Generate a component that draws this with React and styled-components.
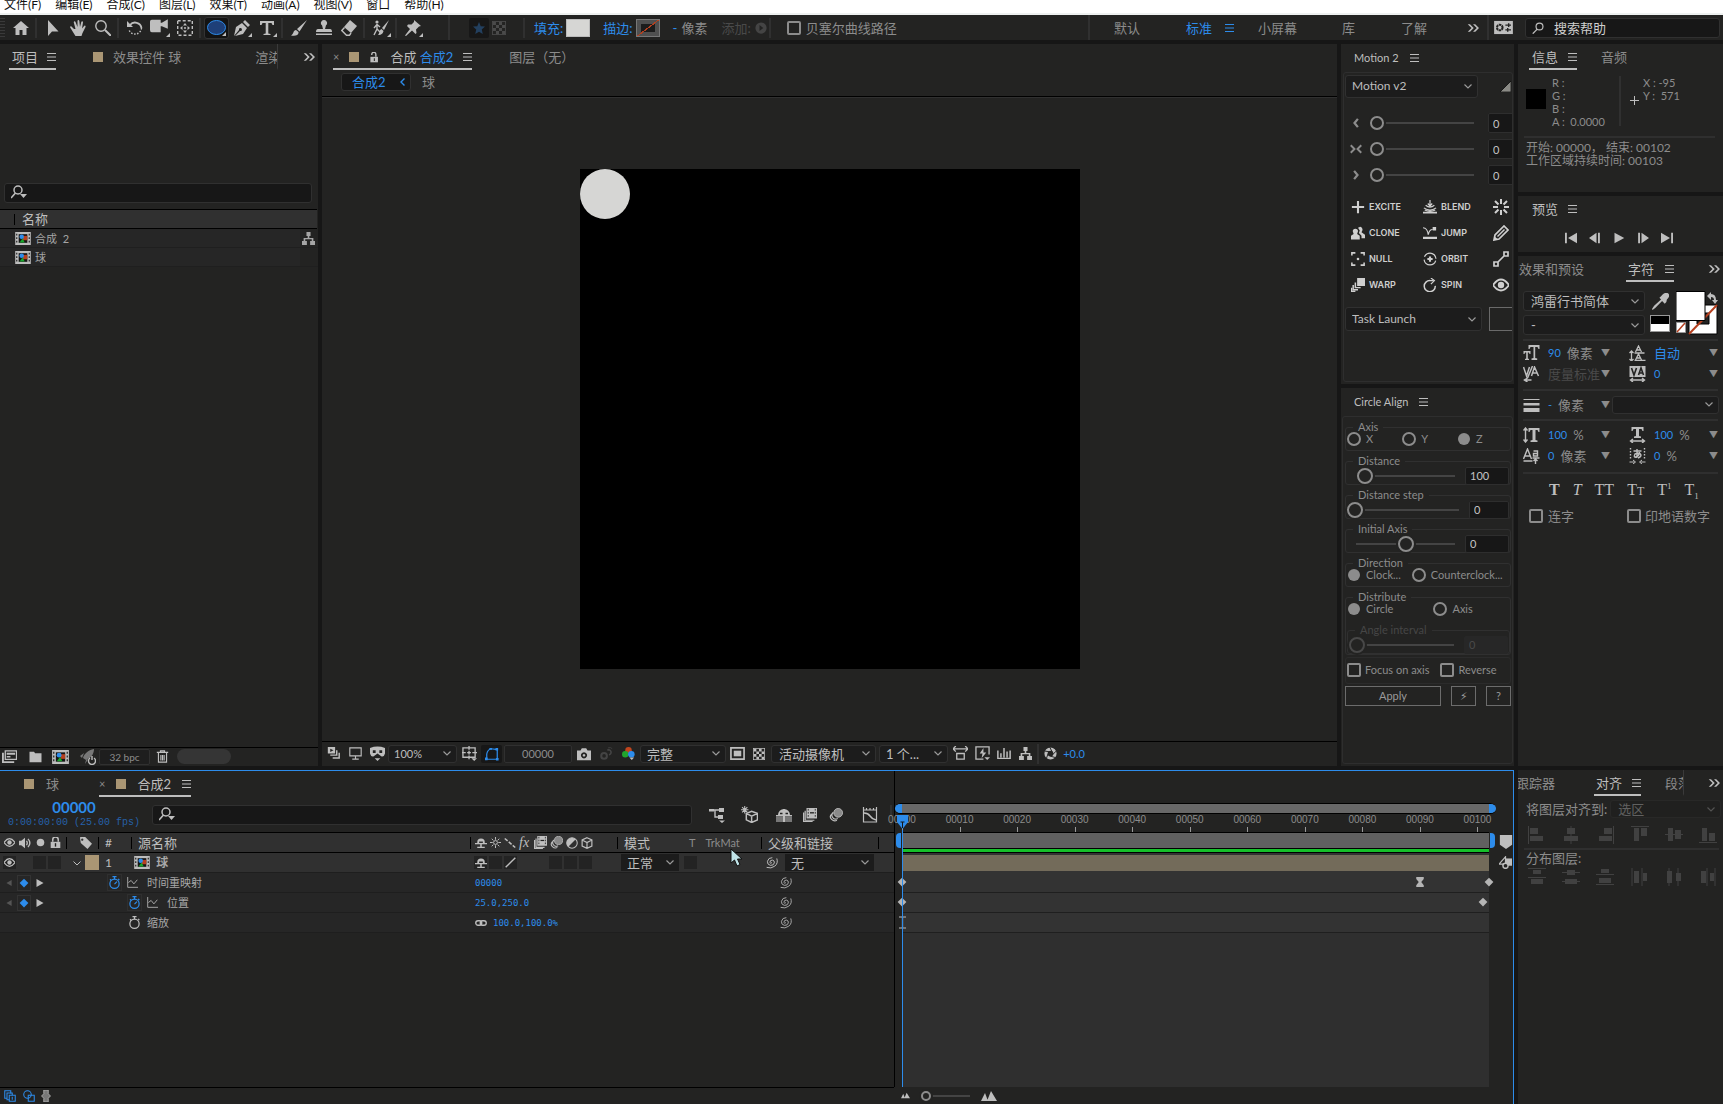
import React from "react";
import styled, { createGlobalStyle, css } from "styled-components";

const BLUE = "#2d8ceb";
const PANEL = "#232322";
const GAP = "#161616";
const DARK = "#171717";
const LINE = "#303030";
const DIM = "#8c8c8c";
const LIGHT = "#bebebe";
const TAN = "#aa9674";

const CHEVRON = `url("data:image/svg+xml,%3Csvg xmlns='http://www.w3.org/2000/svg' width='8' height='5'%3E%3Cpath d='M.5 .5L4 4L7.500 .5' fill='none' stroke='%23999' stroke-width='1.2'/%3E%3C/svg%3E")`;

const GlobalStyle = createGlobalStyle`
  * { box-sizing: border-box; }
  body {
    margin: 0;
    background: ${GAP};
    color: ${DIM};
    font: 12px/14px Lato, "Noto Sans CJK SC", sans-serif;
    overflow: hidden;
  }
  button, input, select { font: inherit; color: inherit; margin: 0; }
  button { background: none; border: 0; padding: 0; white-space: nowrap; }
  svg { display: block; flex: none; }
`;

/* ---------- icons ---------- */

const s = { fill: "none", stroke: "currentColor", strokeWidth: 1.4 };

const paths = {
  home: <path d="M8 1L0 8h2.500v7h4v-5h3v5h4V8H16z" fill="currentColor" />,
  arrow: <path d="M3 0v16l4-4.500h6.500z" fill="currentColor" />,
  hand: <path d="M4 9L1.500 6.500C.5 5.500-.5 7 .5 8l4 6.500 1 1.500h6l1-3 3-6c.5-1.500-1-2-1.600-.8L12 8.500l1-6c.2-1.500-1.500-1.500-1.800-.3L10 7 9.300.8C9-.3 7.500-.3 7.500 1v6L5.500 2C5 .8 3.500 1.300 3.800 2.500L5.500 9z" fill="currentColor" />,
  zoom: <g {...s}><circle cx="6" cy="6" r="5.200" /><path d="M10 10l6 6" strokeWidth="2" /></g>,
  rotate: <g {...s}><path d="M3 5a6.500 6.500 0 0 1 11.500 3" strokeWidth="1.800" /><path d="M14.500 8A6.500 6.500 0 0 1 2 10" strokeDasharray="1.500 1.500" /><path d="M0 1v6h6z" fill="currentColor" stroke="none" /></g>,
  video: <path d="M0 3q0-1.500 1.500-1.500H9V4h1l5-3v8l-5-2h-1v5H1.500Q0 12 0 10z" fill="currentColor" />,
  anchor: <g><rect x=".7" y=".7" width="14.600" height="14.600" {...s} strokeDasharray="3 2" /><path d="M8 3l2 2.500H6zM8 13l2-2.500H6zM3 8l2.500-2v4zM13 8l-2.500-2v4z" fill="currentColor" /><circle cx="8" cy="8" r="1" fill="currentColor" /></g>,
  pen: <path d="M0 16l2-9 6-4 5 5-4 6-8 2 5-5a1.500 1.500 0 1 0-1-1zM9 2l2-2 5 5-2 2z" fill="currentColor" />,
  type: <path d="M1 1h14v4h-1.500L12.500 3H9.300v10.500l2.200.5v1h-7v-1l2.200-.5V3H3.500L2.500 5H1z" fill="currentColor" />,
  brush: <path d="M16 0L6 9l2.500 2.500zM5 10C2 10 3 14 0 15.500c4 1 8 0 7.500-3.500z" fill="currentColor" />,
  stamp: <path d="M8 0a3 3 0 0 0-2 5.300L7 9H2q-2 0-2 3h16q0-3-2-3H9l1-3.700A3 3 0 0 0 8 0zM0 13.500h16V15H0z" fill="currentColor" />,
  eraser: <g><path d="M9 0l7 6-6 7-7-6z" fill="currentColor" /><path d="M3.500 7.500L.8 10.500l4.700 4.700h3L10 13" {...s} /></g>,
  puppet: <g><circle cx="4" cy="2" r="1.600" fill="currentColor" /><path d="M4 4v5M1 8l3-3.500L7 7M4 9l-3 6M4 9l3 3" {...s} /><path d="M16 0L9 8l2 2zM8.500 9C6 10 7 13 5 15c4 0 5-2 5.500-4z" fill="currentColor" /></g>,
  pin: <path d="M9 0l7 6-2 .5-3 3 .5 3.500-1 1L7 10.500 1 16l-1-.5L5 9 2 6l1-1.500h3.500L9 2z" fill="currentColor" />,
  star: <path d="M8 0l2.300 5.500 5.700.5-4.300 4 1.300 6L8 13l-5 3 1.300-6L0 6l5.700-.5z" fill="currentColor" />,
  checker: <g fill="currentColor"><rect x=".5" y=".5" width="15" height="15" fill="none" stroke="currentColor" /><path d="M1 1h3.500v3.500H1zM8 1h3.500v3.500H8zM4.500 4.500H8V8H4.500zM11.500 4.500H15V8h-3.500zM1 8h3.500v3.500H1zM8 8h3.500v3.500H8zM4.500 11.500H8V15H4.500zM11.500 11.500H15V15h-3.500z" /></g>,
  add: <g><circle cx="8" cy="8" r="7.500" fill="currentColor" /><path d="M6 4l5 4-5 4z" fill="#232322" /></g>,
  more: <path d="M1 3l5 5-5 5h3l5-5-5-5zM8 3l5 5-5 5h3l5-5-5-5z" fill="currentColor" />,
  workspace: <g><path d="M0 1h20v14H0z" fill="currentColor" /><path d="M12 5.500h6M15.500 3.500v4M12 10.500h6M14.500 8.500v4" stroke="#232322" strokeWidth="1.500" /><circle cx="6" cy="8" r="3" fill="none" stroke="#232322" strokeWidth="2.200" strokeDasharray="2.600 .6" /></g>,
  search: <g {...s}><circle cx="10" cy="6" r="4.600" strokeWidth="1.600" /><path d="M7 9.500L1 15.500" strokeWidth="1.800" /></g>,
  searchMenu: <g {...s}><circle cx="7" cy="5" r="4" strokeWidth="1.500" /><path d="M4.500 8L0 13" strokeWidth="1.600" /><path d="M9 9h7l-3.500 4z" fill="currentColor" stroke="none" /></g>,
  lockOpen: <g><path d="M2 7h11v8H2z" fill="currentColor" /><path d="M4 4.500V3.500a3 3 0 0 1 6 0V7" {...s} strokeWidth="2" /><path d="M7 9h1.500v4H7z" fill="#232322" /></g>,
  lock: <g><path d="M1 7h14v9H1z" fill="currentColor" /><path d="M4 7V4a4 4 0 0 1 8 0v3" {...s} strokeWidth="2.200" /><path d="M7 9h2v5H7z" fill="#232322" /></g>,
  comp: <g><path d="M0 0h18v15H0z" fill="#bdbdbd" /><path d="M4 2.500h10v10H4z" fill="#161616" /><path d="M1 2h1.500v2H1zM1 6h1.500v2H1zM1 10h1.500v2H1zM15.500 2H17v2h-1.500zM15.500 6H17v2h-1.500zM15.500 10H17v2h-1.500z" fill="#333" /><path d="M9 4.500h5v5H9z" fill="#b5401f" /><circle cx="7.500" cy="5.500" r="2.600" fill="#2d8ceb" /><path d="M5 12l3.500-4.500L11 12z" fill="#18a82c" /></g>,
  tree: <path d="M5.500 0h5v5H9v2.500h5V11h2v5h-6v-5h2V9H4v2h2v5H0v-5h2V7.500h5V5H5.500z" fill="currentColor" />,
  footage: <g><path d="M3.500 2h12v9h-12z" {...s} /><path d="M5 4h9v2H5zM5 7.500h4V9H5z" fill="currentColor" /><path d="M1 4v10h12" {...s} strokeWidth="2" /></g>,
  folder: <path d="M0 1h6l1.500 2H16v12H0z" fill="currentColor" />,
  rocket: <g><path d="M14 0C8 1 4 5 3 9l3 2c5-2 8-6 8-11zM0 7l4-3-2 5zM5 15l1-4 3-2z" fill="#777" /><path d="M10 9a3.500 3.500 0 1 0 4 0M12 7v4" {...s} /></g>,
  trash: <g {...s}><path d="M1 3h14M5.500 3V1h5v2M3 3v12h10V3M6 6v7M8 6v7M10 6v7" /></g>,
  preview: <g><path d="M1 0h9v8H1z" fill="currentColor" /><path d="M4 2l4 2-4 2z" fill="#232322" /><path d="M12 4v6H4M15 7v6.500H7" {...s} strokeWidth="1.800" /></g>,
  monitor: <path d="M1 1h14v10H1zM8 11v4M4 15h8" {...s} />,
  goggles: <path d="M0 2q8-3 16 0v6q-1 4-4 3L8 8l-4 3Q1 12 0 8zM3 4.500h3v3H3zM10 4.500h3v3h-3zM5 13h6l-3 3z" fill="currentColor" fillRule="evenodd" />,
  guides: <g {...s}><path d="M1 2h13v10H1zM7.500 0v4M7.500 10v4M0 7h4M11 7h5M5.500 7h4M7.500 5v4" /><path d="M10 13h6l-3 3z" fill="currentColor" stroke="none" /></g>,
  maskPath: <g {...s}><path d="M2 14V8q1-5 5-6l7 1v11z" /><path d="M0 12h3v3H0zM12.500 12.500h3v3h-3zM12 1h3v3h-3zM5 1h3v2H5z" fill="currentColor" stroke="none" /></g>,
  camera: <path d="M0 4h4l1.500-2.500h5L12 4h4v11H0zM8 6a3.500 3.500 0 1 0 .01 0zM8 8a1.500 1.500 0 1 1-.01 0z" fill="currentColor" fillRule="evenodd" />,
  ghost: <g {...s} strokeWidth="2.500"><circle cx="5" cy="11" r="3.500" /><path d="M9 4a3 3 0 1 1 2 5.500" strokeWidth="2" /><path d="M10 1q3-1 5 1" strokeWidth="1" /></g>,
  rgb: <g><circle cx="8" cy="4" r="4" fill="#c2451d" /><circle cx="4" cy="9" r="4" fill="#21a52e" /><circle cx="11.500" cy="9" r="4" fill="#2d8ceb" /><path d="M9 13h6l-3 3z" fill="#bbb" /></g>,
  region: <g><path d="M1 2h14v12H1z" {...s} strokeWidth="1.800" /><path d="M4 5h8v6H4z" fill="currentColor" /></g>,
  ratio: <path d="M4 8h8v6H4zM0 3h16M3 0L0 3l3 3M13 0l3 3-3 3" {...s} />,
  fast: <g><path d="M15 9V1H1v13h8" {...s} /><path d="M9 2L5 8h3l-1 5 5-6H9zM10 12h6l-3 3z" fill="currentColor" /></g>,
  chart: <path d="M1 4v9h14V4M4.500 7v5M8 1v11M11.500 5v7" {...s} strokeWidth="1.700" />,
  aperture: <g><circle cx="8" cy="8" r="5.500" fill="none" stroke="currentColor" strokeWidth="4" /><path d="M1 5l7 1M7 0l3 6M15 5l-5 5M14 13l-7-2M3 14l2-6" stroke="#232322" strokeWidth="1.200" /></g>,
  excite: <path d="M8 1v14M1 8h14" {...s} strokeWidth="2.400" />,
  blend: <g {...s}><path d="M0 14.500h16" strokeWidth="2" /><path d="M1 9q7 5 14 0M3 6q5 4 10 0M2 11.500q6 3 12 0" /><path d="M8 0v6M5.500 4L8 7l2.500-3" /></g>,
  burst: <path d="M8 0v5M8 11v5M0 8h5M11 8h5M2 2l3.500 3.500M10.500 10.500L14 14M14 2l-3.500 3.500M5.500 10.500L2 14" {...s} strokeWidth="2" />,
  clone: <path d="M10 1a3 3 0 0 1 3 4l-1 2 4 3v4h-4v-3L9 8l1-3-2-3zM5 3a3 3 0 0 1 3 3L7 9l3 2v4.500H0V11l3-2-1-3a3 3 0 0 1 3-3z" fill="currentColor" />,
  jump: <g><path d="M0 13.500h16" {...s} strokeWidth="2.600" /><path d="M0 2q5 0 6 8 1-6 5-6" {...s} /><path d="M11 1h4v4h-4z" fill="currentColor" /></g>,
  pencil: <g {...s}><path d="M1 15l1-5 9-9 4 4-9 9z" strokeWidth="1.700" /><path d="M4.500 11.500l7-7" strokeWidth="1.500" /><path d="M1 15l.7-3.500L4.500 14z" fill="currentColor" stroke="none" /></g>,
  nullObj: <g {...s}><path d="M1 4V1h4M11 1h4v3M15 12v3h-4M5 15H1v-3" strokeWidth="1.800" /><circle cx="8" cy="8" r="1.500" fill="currentColor" stroke="none" /></g>,
  orbit: <g {...s}><circle cx="8" cy="8" r="6.800" strokeDasharray="18 3.400" strokeDashoffset="-2" /><path d="M8 5v6M5 8h6" strokeWidth="2.400" /></g>,
  link: <g {...s}><path d="M1 11h4v4H1zM11 1h4v4h-4zM5 11l6-6" strokeWidth="1.700" /></g>,
  warp: <g><path d="M7 0h9v9H7z" fill="currentColor" /><path d="M5 5v6h6M2.500 8v5.500H8M.5 11v4.500H5" {...s} strokeWidth="1.700" /></g>,
  spin: <g {...s}><path d="M14 9A6.300 6.300 0 1 1 8 3h4" strokeWidth="1.700" /><path d="M9 0l4 3-4 4" /></g>,
  eye: <g><path d="M0 8q8-11 16 0-8 11-16 0z" {...s} strokeWidth="1.800" /><circle cx="8" cy="8" r="3.200" fill="currentColor" /></g>,
  motL: <path d="M10.500 2.500L6 8l4.500 5.500" {...s} strokeWidth="3" />,
  motM: <path d="M1 3l5 5-5 5M15 3l-5 5 5 5" {...s} strokeWidth="2.600" />,
  motR: <path d="M5.500 2.500L10 8l-4.500 5.500" {...s} strokeWidth="3" />,
  corner: <path d="M16 0v16H0z" fill="#8b8b86" stroke="#000" />,
  first: <path d="M0 1h2.500v14H0zM16 1v14L4 8z" fill="currentColor" />,
  prev: <path d="M10 1v14L0 8zM12 1h2.500v14H12z" fill="currentColor" />,
  play: <path d="M2 1l13 7-13 7z" fill="currentColor" />,
  next: <path d="M1.500 1H4v14H1.500zM6 1l10 7-10 7z" fill="currentColor" />,
  last: <path d="M13.500 1H16v14h-2.500zM0 1l12 7-12 7z" fill="currentColor" />,
  dropper: <path d="M10 1.500q4-3.500 6 0 1 2-2 4.500l-.5 2.500L12 10 9.500 7.500 3 14l-2.500 2L0 15l2-3 6.500-6L7 4.500 8.500 3z" fill="currentColor" />,
  fontSize: <path d="M5 0h11v4h-1l-1-2h-2.300v11l2 .5V15H8v-1.500l2-.5V2H7L6 4H5zM0 6h7v3H6l-.5-1.500H4.300v6l1.200.4V15h-4v-1.100l1.200-.4v-6H1.500L1 9H0z" fill="currentColor" />,
  leading: <g {...s} strokeWidth="1.300"><path d="M6 7l3-6 3 6M7 5h4M5 8h10M6 15l3-6 3 6M7 13h4M5 15.500h11M2 6v10M0 8l2-2 2 2M0 14l2 2 2-2" /></g>,
  kerning: <g {...s} strokeWidth="1.500"><path d="M0 1l3 9 3-9M4 12L9 0M8 10l3-9 4 9M9 7h5M1 14h7M4 12l-3 2 3 2" /></g>,
  tracking: <g><path d="M0 0h16v11H0z" fill="currentColor" /><path d="M2 2l2.500 7L7 2M9 9l2.500-7L14 9M10 7h3" fill="none" stroke="#232322" strokeWidth="1.600" /><path d="M1 14h14M3.500 12L1 14l2.500 2M12.500 12l2.500 2-2.500 2" {...s} /></g>,
  strokeW: <path d="M0 2h16v1H0zM0 6h16v2.500H0zM0 11h16v4H0z" fill="currentColor" />,
  vScale: <g><path d="M5 1h11v4h-1l-1-2h-2v10l2 .5V15H7v-1.500l2-.5V3H7L6 5H5z" fill="currentColor" /><path d="M2 1v14M0 3.500L2 1l2 2.500M0 12.500L2 15l2-2.500" {...s} /></g>,
  hScale: <g><path d="M2 0h12v4h-1l-1-2H9.500v7l2 .5V11h-7V9.500l2-.5V2H4L3 4H2z" fill="currentColor" /><path d="M1 14h14M3.500 12L1 14l2.500 2M12.500 12l2.500 2-2.500 2" {...s} /></g>,
  baseline: <g {...s}><path d="M0 11L4 1l4 10M1.500 8h5M0 13h9M10 3h4v5h-4V5.500h4M9 10h7M12 16v-5M10 13l2-2 2 2" /></g>,
  tsume: <g {...s}><path d="M4 3h8M7.500 1v8q-4 1-2-3 5-2 6 1 0 2-3 3M10 4q0 4-4 5" /><path d="M1 0v12M15 0v12" strokeDasharray="1.500 1.500" /><path d="M0 14h5M16 14h-5M3.500 12L6 14l-2.500 2M12.500 12L10 14l2.500 2" strokeWidth="1" /></g>,
  flow: <g><path d="M0 3h11M6 3v7h5" {...s} /><path d="M0 2h5v2.500H0zM10 1h5v4h-5zM9 8h5v4H9zM10 13.500h6l-3 2.500z" fill="currentColor" /></g>,
  draft: <g {...s}><path d="M5 7l5-2 5.500 2v6L10 15.500 5 13zM5 7l5 2.500L15.500 7M10 9.500v6" /><path d="M3.500 0v7M0 3.500h7M1 1l5 5M6 1L1 6" strokeWidth="1" /></g>,
  shy: <g><path d="M2 8a6 6 0 0 1 12 0h2v1.500H0V8z" fill="currentColor" /><path d="M0 10h16v5H0z" fill="#777" /><path d="M8 2v13" stroke="currentColor" strokeWidth="2" /><path d="M4 6.500h2.500M9.500 6.500H12" stroke="#232322" strokeWidth="1.500" /></g>,
  shySmall: <path d="M3 7a5 5 0 0 1 10 0v1h3v1.500H9V13h4v1.500H3V13h4V9.500H0V8h3zM5.500 6v2h5V6z" fill="currentColor" fillRule="evenodd" />,
  sun: <g {...s}><circle cx="8" cy="8" r="2.800" /><path d="M8 0v4M8 12v4M0 8h4M12 8h4M2.500 2.500l2.500 2.500M11 11l2.500 2.500M13.500 2.500L11 5M5 11l-2.500 2.500" /></g>,
  quality: <path d="M1 2l14 12" {...s} strokeWidth="2" strokeDasharray="5 2" />,
  slash: <path d="M1 15L15 1" {...s} strokeWidth="2" />,
  film: <g><path d="M4 0h12v12H4z" fill="currentColor" /><path d="M6 1v10M14 1v10" stroke="#232322" strokeDasharray="2 1.500" /><path d="M8 5.500h4.500" stroke="#232322" strokeWidth="1.500" /><path d="M2.500 3v11H13M.7 5v10.500H11" {...s} /></g>,
  blur: <g><circle cx="10.500" cy="5.500" r="5" fill="#8a8a8a" stroke="currentColor" /><path d="M5 5Q2 7 4 10.500t6 1.500M3 7q-3 3 0 6t6 1" {...s} /></g>,
  adjust: <g><circle cx="8" cy="8" r="7" {...s} /><path d="M13 3A7 7 0 0 0 3 13z" fill="currentColor" /></g>,
  cube: <path d="M8 1l6.500 3v8L8 15l-6.500-3V4zM1.500 4L8 7.500 14.500 4M8 7.500V15" {...s} strokeWidth="1.600" />,
  graph: <g {...s} strokeWidth="1.200"><path d="M1.500 3h13v12h-13zM1.500 0v3M4.500 1v2M8 1v2M11.500 1v2M14.500 0v3" /><path d="M2 6q4 0 6 3t6 4" strokeWidth="1.500" /></g>,
  sound: <g><path d="M0 5h3l5-4v14l-5-4H0z" fill="currentColor" /><path d="M10 5q2 3 0 6M12 2.500q5 5.500 0 11" {...s} strokeWidth="1.800" /></g>,
  dot: <circle cx="8" cy="8" r="5.500" fill="currentColor" />,
  tag: <path d="M0 1q0-1 1-1h6l9 9-6 7-9-8zM3 2a1.500 1.500 0 1 0 .01 0z" fill="currentColor" fillRule="evenodd" />,
  spiral: <path d="M8.500 8q-1.500 2-2.500 0 0-3 3-3 3 .5 2.500 3.500-1 3.500-5 3-4-1-3.500-5Q4 2 9 2M14.500 3q2 6-2.500 9.500t-10 1.500" {...s} strokeWidth="1.200" />,
  watch: <g {...s} strokeWidth="1.500"><circle cx="8" cy="9.500" r="5.700" /><path d="M5.500.8h5M8 1v3M12.500 3.500L14 5M2.500 4L4 5.500" /></g>,
  watchOn: <g {...s} strokeWidth="1.500"><circle cx="8" cy="9.500" r="5.700" /><path d="M5.500.8h5M8 1v3M12.500 3.500L14 5M2.500 4L4 5.500M8 10l3-3" /></g>,
  curve: <path d="M1 0v15h15M2 8l4-3 4 5 5-6" {...s} />,
  chain: <g {...s} strokeWidth="1.800"><rect x="1" y="5" width="8" height="6" rx="3" /><rect x="7" y="5" width="8" height="6" rx="3" /></g>,
  left: <path d="M15 0v16L1 8z" fill="currentColor" />,
  right: <path d="M1 0v16l14-8z" fill="currentColor" />,
  diamond: <path d="M8 1l7 7-7 7-7-7z" fill="currentColor" />,
  hourglass: <path d="M2 0h12v3l-4 5 4 5v3H2v-3l4-5-4-5z" fill="currentColor" />,
  chevron: <path d="M1 5l7 7 7-7" {...s} strokeWidth="2" />,
  marker: <path d="M1 0h14v11l-7 5-7-5z" fill="currentColor" />,
  bin: <g><path d="M7 3h9v9H7z" fill="currentColor" /><path d="M0 10L8 1v9z" fill="#232322" stroke="currentColor" strokeWidth="1.500" /><circle cx="8" cy="12" r="3.200" fill="#232322" stroke="currentColor" strokeWidth="1.800" /></g>,
  layers: <g {...s}><path d="M9 5V1H1v10h3M11 7V4H4v9h3" /><path d="M7 7h8v8H7zM11 9v4" /></g>,
  modes: <g {...s}><circle cx="6" cy="6" r="5" /><path d="M7 7h8v8H7z" /></g>,
  braces: <path d="M5 0h6v5l3 3-3 3v5H5v-5L2 8l3-3z" fill="#777" stroke="currentColor" />,
  mountain: <path d="M4 5l3 8H0zM10 3l6 10H6z" fill="currentColor" />,
};

const boxes = { comp: "0 0 18 15", workspace: "0 0 20 16" };

const Icon = ({ name, size = 14, h }) => (
  <svg width={size} height={h || size} viewBox={boxes[name] || "0 0 16 16"} aria-hidden="true">
    {paths[name]}
  </svg>
);

const Burger = () => (
  <svg width="9" height="8" viewBox="0 0 9 8" aria-hidden="true">
    <path d="M0 .5h9M0 4h9M0 7.500h9" stroke="currentColor" />
  </svg>
);

/* ---------- shared parts ---------- */

const Shell = styled.div`
  height: 100vh;
  display: flex;
  flex-direction: column;
`;

const MenuBar = styled.nav`
  height: 15px;
  flex: none;
  display: flex;
  gap: 14px;
  padding-left: 4px;
  overflow: hidden;
  background: #fff;
  border-bottom: 2px solid #eef1f0;
  button { color: #111; height: 10px; line-height: 10px; }
`;

const Panel = styled.section`
  background: ${PANEL};
  min-width: 0;
  min-height: 0;
  overflow: hidden;
  display: flex;
  flex-direction: column;
  flex: ${(p) => p.$flex || "none"};
  height: ${(p) => (p.$h ? p.$h + "px" : "auto")};
`;

const Tabs = styled.div`
  flex: none;
  display: flex;
  height: 26px;
  padding-left: ${(p) => p.$pl || 0}px;
  padding-right: 3px;
  font-size: 13px;
`;

const Tab = styled.button`
  display: flex;
  align-items: center;
  gap: ${(p) => p.$gap || 10}px;
  margin-left: ${(p) => p.$ml || 0}px;
  padding-left: ${(p) => p.$pl || 0}px;
  padding-top: 2px;
  overflow: hidden;
  color: ${(p) => (p.$on ? LIGHT : DIM)};
  border-bottom: 2px solid ${(p) => (p.$line ? LIGHT : "transparent")};
  ${(p) => p.$w && css`width: ${p.$w}px;`}
  ${(p) => p.$cut && css`border-right: 1px solid #3a3a3a;`}
  ${(p) => p.$small && css`font-size: 11px; padding-top: 4px;`}
  b { font-weight: 400; color: ${BLUE}; }
  small { font-size: 11px; color: ${DIM}; }
`;

const More = styled.button`
  margin-left: auto;
  color: ${LIGHT};
`;

const Swatch = styled.i`
  width: 10px;
  height: 10px;
  background: ${TAN};
`;

const IconButton = styled.button`
  flex: none;
  display: grid;
  place-items: center;
  width: ${(p) => p.$w || 14}px;
  height: ${(p) => p.$h || 18}px;
  margin-left: ${(p) => p.$ml || 0}px;
  color: ${(p) => p.$color || LIGHT};
  background: ${(p) => (p.$boxed ? DARK : "none")};
  border-radius: 2px;
`;

const Select = styled.select`
  appearance: none;
  flex: ${(p) => (p.$w ? "none" : "1")};
  width: ${(p) => (p.$w ? p.$w + "px" : "auto")};
  height: ${(p) => p.$h || 18}px;
  margin-left: ${(p) => p.$ml || 0}px;
  padding: 0 14px 0 ${(p) => p.$pl || 6}px;
  font-size: ${(p) => p.$fs || 13}px;
  color: ${LIGHT};
  background: #1c1c1c ${CHEVRON} no-repeat right 5px center;
  border: 1px solid ${LINE};
  border-radius: 3px;
  min-width: 0;
  opacity: ${(p) => (p.disabled ? 0.4 : 1)};
`;

const SearchField = styled.label`
  display: flex;
  align-items: center;
  gap: 10px;
  height: 20px;
  padding-left: ${(p) => p.$pl || 6}px;
  color: ${LIGHT};
  background: ${DARK};
  border: 1px solid ${LINE};
  border-radius: 3px;
  flex: ${(p) => p.$flex || "none"};
  width: ${(p) => (p.$w ? p.$w + "px" : "auto")};
  margin: ${(p) => p.$m || "0"};
  input {
    flex: 1;
    min-width: 0;
    background: none;
    border: 0;
    outline: 0;
    padding: 0;
    &::placeholder { color: #cfcfcf; }
  }
`;

const Field = styled.input`
  width: ${(p) => p.$w}px;
  height: ${(p) => p.$h || 18}px;
  padding: 0 0 0 4px;
  font-size: 11px;
  color: #c4c4c4;
  background: ${DARK};
  border: 1px solid #2e2e2e;
  border-radius: 2px;
  &:disabled { color: #4a4a4a; background: #272727; border-color: #272727; }
`;

const Check = styled.label`
  display: flex;
  align-items: center;
  gap: ${(p) => p.$gap || 5}px;
  margin-left: ${(p) => p.$ml || 0}px;
  font-size: ${(p) => p.$fs || 11}px;
  white-space: nowrap;
  input {
    appearance: none;
    width: 14px;
    height: 14px;
    border: 2px solid ${DIM};
    border-radius: ${(p) => (p.$round ? "50%" : "2px")};
    flex: none;
  }
  input[type="radio"]:checked { background: ${DIM}; border-width: 0; width: 12px; height: 12px; margin: 1px; }
`;

const Caption = styled.span`
  font-size: 13px;
  white-space: nowrap;
`;

const Range = styled.input`
  appearance: none;
  flex: 1;
  min-width: 0;
  height: 16px;
  margin: 0;
  background: linear-gradient(#444, #444) center / 100% 2px no-repeat;
  &::-webkit-slider-thumb {
    appearance: none;
    width: ${(p) => p.$size || 14}px;
    height: ${(p) => p.$size || 14}px;
    border-radius: 50%;
    border: 2px solid ${DIM};
    background: ${PANEL};
    box-shadow: 0 0 0 2px ${PANEL};
  }
  &:disabled::-webkit-slider-thumb { border-color: #484848; }
`;

/* ---------- toolbar ---------- */

const ToolRow = styled.header`
  flex: none;
  height: 25px;
  display: flex;
  align-items: center;
  background: ${PANEL};
  margin-bottom: 4px;
  font-size: 13px;
  white-space: nowrap;
`;

const Grip = styled.i`
  width: 5px;
  margin-right: 3px;
  height: 19px;
  background: repeating-linear-gradient(#3a3a3a 0 1px, transparent 1px 3px);
`;

const Tool = styled.button`
  position: relative;
  width: 25px;
  height: 22px;
  display: grid;
  place-items: center;
  color: ${LIGHT};
  border-radius: 3px;
  ${(p) => p.$active && css`background: #131313; border: 1px solid #333;`}
  ${(p) => p.$sub && css`
    &::after {
      content: "";
      position: absolute;
      right: 2px;
      bottom: 2px;
      border: 2px solid;
      border-color: transparent ${LIGHT} ${LIGHT} transparent;
    }
  `}
`;

const Sep = styled.i`
  width: 2px;
  height: ${(p) => p.$h || 20}px;
  background: #303030;
  flex: none;
  margin: 0 ${(p) => (p.$mr === undefined ? 3 : p.$mr)}px 0 ${(p) => (p.$ml === undefined ? 2 : p.$ml)}px;
`;

const Spacer = styled.i`
  flex: 1;
`;

const ToolText = styled.button`
  margin-left: ${(p) => p.$ml || 0}px;
  color: ${(p) => p.$color || DIM};
  display: flex;
  align-items: center;
  gap: 13px;
`;

const Fill = styled.button`
  width: 24px;
  height: 18px;
  margin-left: 3px;
  background: ${(p) => (p.$none ? "#1c1c1c" : "#d6d6d4")};
  border: 1px solid #bbb;
  ${(p) => p.$none && css`
    border-color: #777;
    background: linear-gradient(143deg, transparent 48%, #b5401f 48% 52%, transparent 52%), linear-gradient(#1c1c1c, #1c1c1c) center / 14px 8px no-repeat, #505050;
  `}
`;

const toolGroups = [
  [["arrow"], ["hand"], ["zoom"]],
  [["rotate"], ["video", 1], ["anchor"]],
  [["ellipse", 1], ["pen", 1], ["type", 1]],
  [["brush"], ["stamp"], ["eraser"]],
  [["puppet", 1]],
  [["pin", 1]],
];

const Toolbar = () => (
  <ToolRow>
    <Grip />
    <Tool aria-label="home"><Icon name="home" size={16} /></Tool>
    {toolGroups.map((group, i) => (
      <React.Fragment key={i}>
        <Sep />
        {group.map(([name, sub]) => (
          <Tool key={name} aria-label={name} $sub={sub} $active={name === "ellipse"}>
            {name === "ellipse" ? (
              <svg width="19" height="15"><ellipse cx="9.500" cy="7.500" rx="9" ry="7" fill="#1e3f78" stroke={BLUE} /></svg>
            ) : (
              <Icon name={name} size={name === "video" ? 19 : 16} />
            )}
          </Tool>
        ))}
      </React.Fragment>
    ))}
    <Sep $ml={23} $mr={19} $h={25} />
    <IconButton $w={20} $h={20} $boxed $color="#23405f"><Icon name="star" size={12} /></IconButton>
    <IconButton $ml={3} $color="#4a4a4a"><Icon name="checker" /></IconButton>
    <Sep $ml={17} $mr={9} />
    <ToolText $color={BLUE}>填充:</ToolText>
    <Fill aria-label="填充颜色" />
    <ToolText $color={BLUE} $ml={13}>描边:</ToolText>
    <Fill $none aria-label="描边颜色" />
    <ToolText $color={BLUE} $ml={13}>-</ToolText>
    <ToolText $ml={4}>像素</ToolText>
    <ToolText $ml={14} $color="#4a4a4a">添加:</ToolText>
    <IconButton $w={12} $ml={4} $color="#444"><Icon name="add" size={12} /></IconButton>
    <Sep $ml={2} $mr={0} />
    <Check $ml={16} $fs={13}><input type="checkbox" />贝塞尔曲线路径</Check>
    <Spacer />
    <Sep $ml={0} $mr={0} $h={25} />
    <ToolText $ml={24}>默认</ToolText>
    <ToolText $ml={46} $color={BLUE}>标准<Burger /></ToolText>
    <ToolText $ml={24}>小屏幕</ToolText>
    <ToolText $ml={45}>库</ToolText>
    <ToolText $ml={46}>了解</ToolText>
    <ToolText $ml={40} $color={LIGHT}><Icon name="more" size={12} /></ToolText>
    <Sep $ml={8} $mr={5} $h={25} />
    <IconButton $w={19}><Icon name="workspace" size={19} h={15} /></IconButton>
    <SearchField $w={195} $m="0 3px 0 12px">
      <Icon name="search" size={12} />
      <input aria-label="搜索帮助" placeholder="搜索帮助" />
    </SearchField>
  </ToolRow>
);

/* ---------- project ---------- */

const ListHead = styled.div`
  height: 20px;
  margin-right: 1px;
  display: flex;
  align-items: center;
  padding-left: 14px;
  gap: 7px;
  background: #303030;
  border: solid #000;
  border-width: 1px 0;
  color: ${LIGHT};
  font-size: 13px;
  &::before { content: ""; width: 1px; height: 11px; background: #000; }
`;

const ListRow = styled.div`
  height: 19px;
  display: flex;
  align-items: center;
  gap: 4px;
  padding: 1px 3px 0 15px;
  font-size: 11px;
  color: #a5a5a5;
  background: linear-gradient(90deg, #262626 300px, transparent 300px);
  border-bottom: 1px solid #1f1f1f;
  & > span { flex: 1; }
`;

const FootBar = styled.footer`
  flex: none;
  display: flex;
  align-items: center;
  height: ${(p) => p.$h}px;
  padding-bottom: 1px;
  border-top: 1px solid #000;
  margin-top: auto;
`;

const Depth = styled.button`
  width: 51px;
  height: 16px;
  font-size: 10px;
  margin-left: 3px;
  background: #1e1e1e;
  border: 1px solid ${LINE};
  border-radius: 2px;
`;

const Pill = styled.i`
  width: 54px;
  height: 15px;
  margin-left: 8px;
  border-radius: 8px;
  background: #353535;
`;

const Project = () => (
  <Panel>
    <Tabs $pl={9}>
      <Tab $on $line $pl={3} $gap={9}>项目<Burger /></Tab>
      <Tab $ml={37}><Swatch />效果控件 球</Tab>
      <Tab $ml={74} $w={23} $cut>渲染</Tab>
      <More><Icon name="more" size={12} /></More>
    </Tabs>
    <SearchField $m="113px 6px 6px 4px">
      <Icon name="searchMenu" size={16} />
      <input aria-label="搜索项目" />
    </SearchField>
    <ListHead>名称</ListHead>
    <ListRow><Icon name="comp" size={16} h={13} /><span>合成&nbsp;&nbsp;2</span><Icon name="tree" size={13} /></ListRow>
    <ListRow><Icon name="comp" size={16} h={13} /><span>球</span></ListRow>
    <FootBar $h={19}>
      <IconButton $ml={2} $w={15}><Icon name="footage" size={15} /></IconButton>
      <IconButton $ml={11} $w={14}><Icon name="folder" size={13} h={12} /></IconButton>
      <IconButton $ml={10} $w={17}><Icon name="comp" size={17} h={14} /></IconButton>
      <IconButton $ml={10} $w={17}><Icon name="rocket" size={16} /></IconButton>
      <Depth>32 bpc</Depth>
      <IconButton $ml={5}><Icon name="trash" size={13} /></IconButton>
      <Pill />
    </FootBar>
  </Panel>
);

/* ---------- composition viewer ---------- */

const Crumbs = styled.div`
  display: flex;
  align-items: center;
  height: 27px;
  padding: 0 0 2px 19px;
  font-size: 13px;
  border-bottom: 1px solid #000;
  box-shadow: 0 1px #303030;
  button:first-child {
    width: 70px;
    height: 18px;
    margin-right: 11px;
    padding: 0 5px 0 10px;
    display: flex;
    align-items: center;
    justify-content: space-between;
    color: ${BLUE};
    background: ${DARK};
    border: 1px solid ${LINE};
    border-radius: 3px;
  }
`;

const Stage = styled.div`
  flex: 1;
  min-height: 0;
  display: grid;
  place-items: center;
`;

const Canvas = styled.div`
  width: 500px;
  height: 500px;
  background: #000;
`;

const Ball = styled.div`
  width: 50px;
  height: 50px;
  border-radius: 50%;
  background: #d6d6d4;
`;

const Readout = styled.button`
  width: ${(p) => p.$w}px;
  height: 18px;
  margin-left: ${(p) => p.$ml}px;
  font-size: 11px;
  ${(p) => p.$boxed && css`background: #1e1e1e; border: 1px solid ${LINE}; border-radius: 2px;`}
  color: ${(p) => p.$color || DIM};
`;

const Viewer = () => (
  <Panel>
    <Tabs $pl={11}>
      <Tab $on $line><small>×</small><Swatch /><Icon name="lockOpen" size={11} /><span>合成 <b>合成2</b></span><Burger /></Tab>
      <Tab $ml={37}>图层（无）</Tab>
    </Tabs>
    <Crumbs>
      <button>合成2<svg width="5" height="8"><path d="M4.500.5L1 4l3.500 3.500" {...s} /></svg></button>
      <button>球</button>
    </Crumbs>
    <Stage><Canvas><Ball /></Canvas></Stage>
    <FootBar $h={25}>
      <IconButton $ml={5} $w={13}><Icon name="preview" size={13} /></IconButton>
      <IconButton $ml={9} $w={13}><Icon name="monitor" size={13} /></IconButton>
      <IconButton $ml={7} $w={16}><Icon name="goggles" size={15} /></IconButton>
      <Select $w={69} $ml={3} $pl={5} $fs={11} aria-label="放大率"><option>100%</option></Select>
      <IconButton $ml={5} $w={15}><Icon name="guides" size={15} /></IconButton>
      <IconButton $ml={4} $w={21} $boxed $color={BLUE}><Icon name="maskPath" /></IconButton>
      <Readout $ml={2} $w={68} $boxed>00000</Readout>
      <IconButton $ml={5}><Icon name="camera" /></IconButton>
      <IconButton $ml={8} $color="#444"><Icon name="ghost" size={13} /></IconButton>
      <IconButton $ml={8}><Icon name="rgb" size={13} /></IconButton>
      <Select $w={86} $ml={5} aria-label="分辨率"><option>完整</option></Select>
      <IconButton $ml={4}><Icon name="region" size={15} /></IconButton>
      <IconButton $ml={8}><Icon name="checker" size={14} h={12} /></IconButton>
      <Select $w={105} $ml={5} $pl={7} aria-label="视图"><option>活动摄像机</option></Select>
      <Select $w={69} $ml={3} aria-label="视图数量"><option>1 个...</option></Select>
      <IconButton $ml={5}><Icon name="ratio" size={15} /></IconButton>
      <IconButton $ml={8}><Icon name="fast" size={15} /></IconButton>
      <IconButton $ml={8}><Icon name="chart" size={14} /></IconButton>
      <IconButton $ml={7}><Icon name="tree" size={13} /></IconButton>
      <Sep $ml={5} $mr={5} />
      <IconButton $w={13}><Icon name="aperture" size={13} /></IconButton>
      <Readout $ml={5} $w={24} $color={BLUE}>+0.0</Readout>
    </FootBar>
  </Panel>
);

/* ---------- scripts: Motion 2, Circle Align ---------- */

const Column = styled.div`
  display: flex;
  flex-direction: column;
  gap: 4px;
  min-height: 0;
`;

const Frame = styled.div`
  flex: 1;
  margin: 2px 1px 2px ${(p) => p.$ml || 2}px;
  padding: ${(p) => p.$p || "2px 0 0"};
  border: 1px solid #2e2e2e;
  border-radius: 3px;
  overflow: hidden;
`;

const FlexRow = styled.div`
  display: flex;
  align-items: center;
  height: ${(p) => p.$h || 18}px;
  padding: ${(p) => p.$p || 0};
`;

const MotionSlider = styled.label`
  display: grid;
  grid-template-columns: 26px 1fr 24px;
  align-items: center;
  height: 26px;
  svg { margin-left: 6px; }
  input[type="range"] { margin-right: 14px; }
`;

const MotionGrid = styled.div`
  display: grid;
  grid-template-columns: 72px 70px 1fr;
  grid-auto-rows: 26px;
  padding: 6px 0 9px 7px;
  button {
    display: flex;
    align-items: center;
    gap: 4px;
    overflow: hidden;
    color: #cfcfcf;
    font: 600 9px/12px Inter, sans-serif;
  }
`;

const LaunchBox = styled.button`
  width: 24px;
  height: 24px;
  margin-left: 7px;
  border: 1px solid #6a6a6a;
  border-right: 0;
`;

const motionButtons = [
  ["excite", "EXCITE"], ["blend", "BLEND"], ["burst"],
  ["clone", "CLONE"], ["jump", "JUMP"], ["pencil"],
  ["nullObj", "NULL"], ["orbit", "ORBIT"], ["link"],
  ["warp", "WARP"], ["spin", "SPIN"], ["eye"],
];

const Motion = () => (
  <Panel $h={340}>
    <Tabs $pl={13}><Tab $on $small $gap={11}>Motion 2<Burger /></Tab></Tabs>
    <Frame>
      <FlexRow $h={22}>
        <Select $w={133} $h={23} $ml={1} $fs={12} aria-label="Motion 版本"><option>Motion v2</option></Select>
        <IconButton $ml={22} $w={11}><Icon name="corner" size={11} /></IconButton>
      </FlexRow>
      <FlexRow $h={13} />
      {["motL", "motM", "motR"].map((n) => (
        <MotionSlider key={n}>
          <Icon name={n} size={12} />
          <Range type="range" defaultValue={0} aria-label={n} />
          <Field $w={30} $h={20} defaultValue="0" aria-label={n + " value"} />
        </MotionSlider>
      ))}
      <MotionGrid>
        {motionButtons.map(([icon, label]) => (
          <button key={icon} aria-label={label || icon}><Icon name={icon} size={label ? 14 : 16} />{label}</button>
        ))}
      </MotionGrid>
      <FlexRow $h={24}>
        <Select $w={137} $h={24} $ml={1} $fs={12} aria-label="Task"><option>Task Launch</option></Select>
        <LaunchBox aria-label="launch" />
      </FlexRow>
    </Frame>
  </Panel>
);

const Group = styled.fieldset`
  height: ${(p) => p.$h || 30}px;
  min-width: 0;
  margin: 0 0 4px;
  padding: 0 0 0 1px;
  border: 1px solid #303030;
  border-radius: 3px;
  color: ${(p) => (p.disabled ? "#464646" : DIM)};
  legend { font-size: 11px; line-height: 12px; padding: 0 5px; margin-left: 6px; }
`;

const OutlineButton = styled.button`
  flex: ${(p) => (p.$w ? "none" : "1")};
  width: ${(p) => (p.$w ? p.$w + "px" : "auto")};
  height: 20px;
  font-size: 11px;
  border: 1px solid #6c6c6c;
  color: #9a9a9a;
`;

const ButtonRow = styled.div`
  display: flex;
  gap: 10px;
  margin-top: 2px;
`;

const CheckBoxes = styled.div`
  display: flex;
  align-items: center;
  height: 27px;
  margin-top: -2px;
  padding: 0 0 2px 1px;
  border: 1px solid #2b2b2b;
  border-radius: 3px;
`;

const Slider = ({ label, start = 0, thumb = 0, value, w = 44, disabled }) => (
  <FlexRow $h={17} $p={`0 1px 0 ${start}px`}>
    <Range $size={16} type="range" defaultValue={thumb} disabled={disabled} aria-label={label} />
    <FlexRow $p="0 0 0 10px">
      <Field $w={w} defaultValue={value} disabled={disabled} aria-label={label + " value"} />
    </FlexRow>
  </FlexRow>
);

const CircleAlign = () => (
  <Panel $flex="1">
    <Tabs $pl={13}><Tab $on $small $gap={11}>Circle Align<Burger /></Tab></Tabs>
    <Frame $ml={1} $p="4px 1px 0 2px">
      <Group>
        <legend>Axis</legend>
        <FlexRow $h={12}>
          <Check $round><input type="radio" name="axis" />X</Check>
          <Check $round $ml={29}><input type="radio" name="axis" />Y</Check>
          <Check $round $ml={29}><input type="radio" name="axis" defaultChecked />Z</Check>
        </FlexRow>
      </Group>
      <Group><legend>Distance</legend><Slider label="Distance" start={10} value="100" /></Group>
      <Group><legend>Distance step</legend><Slider label="Distance step" value="0" w={40} /></Group>
      <Group><legend>Initial Axis</legend><Slider label="Initial Axis" start={9} thumb={50} value="0" /></Group>
      <Group>
        <legend>Direction</legend>
        <FlexRow $h={12}>
          <Check $round><input type="radio" name="dir" defaultChecked />Clock...</Check>
          <Check $round $ml={11}><input type="radio" name="dir" />Counterclock...</Check>
        </FlexRow>
      </Group>
      <Group $h={64}>
        <legend>Distribute</legend>
        <FlexRow $h={12}>
          <Check $round><input type="radio" name="dist" defaultChecked />Circle</Check>
          <Check $round $ml={40}><input type="radio" name="dist" />Axis</Check>
        </FlexRow>
        <FlexRow $h={9} />
        <Group disabled $h={30}>
          <legend>Angle interval</legend>
          <Slider label="Angle interval" value="0" disabled />
        </Group>
      </Group>
      <CheckBoxes>
        <Check $gap={4}><input type="checkbox" />Focus on axis</Check>
        <Check $gap={4} $ml={11}><input type="checkbox" />Reverse</Check>
      </CheckBoxes>
      <ButtonRow>
        <OutlineButton>Apply</OutlineButton>
        <OutlineButton $w={25}>⚡︎</OutlineButton>
        <OutlineButton $w={25}>?</OutlineButton>
      </ButtonRow>
    </Frame>
  </Panel>
);

/* ---------- info, preview, character, align ---------- */

const InfoGrid = styled.div`
  display: grid;
  grid-template-columns: 26px 67px 2px 1fr;
  height: 53px;
  margin: 6px 8px 7px;
  font-size: 11px;
  line-height: 13px;
  p { margin: 0; white-space: pre; }
`;

const ColorBox = styled.i`
  width: 20px;
  height: 20px;
  margin-top: 13px;
  background: #000;
`;

const Divider = styled.hr`
  flex: none;
  border: 0;
  height: 2px;
  background: #2f2f2f;
  margin: ${(p) => p.$m || "0"};
`;

const VLine = styled.i`
  height: 50px;
  background: #303030;
`;

const Position = styled.div`
  display: flex;
  gap: 4px;
  padding-left: 9px;
  svg { margin-top: 20px; }
`;

const InfoText = styled.p`
  margin: 0;
  padding: 3px 8px;
  font-size: 12px;
  line-height: 13px;
`;

const Transport = styled.div`
  display: flex;
  gap: 12px;
  padding: 10px 0 0 47px;
  color: ${LIGHT};
`;

const CharTop = styled.div`
  display: grid;
  grid-template-columns: 122px 21px 1fr;
  column-gap: 5px;
  padding: 9px 5px 4px;
`;

const Stack = styled.div`
  display: flex;
  flex-direction: column;
  gap: 4px;
`;

const TypeSelect = styled(Select)`
  flex: none;
  height: 20px;
  padding-left: 7px;
`;

const BlackWhite = styled.button`
  width: 20px;
  height: 17px;
  background: linear-gradient(#000 50%, #fff 50%);
  border: 1px solid #999;
`;

const CharGrid = styled.div`
  display: grid;
  grid-template-columns: 88px 1fr;
  column-gap: ${(p) => (p.$tight ? 1 : 18)}px;
  grid-auto-rows: 21px;
  align-items: center;
  padding: 0 4px 0 5px;
  font-size: 13px;
`;

const CharCell = styled.label`
  display: flex;
  align-items: center;
  height: 18px;
  min-width: 0;
  color: ${(p) => (p.$off ? "#4a4a4a" : DIM)};
  white-space: nowrap;
  svg { color: ${LIGHT}; }
  b { font-weight: 400; font-size: ${(p) => (p.$cjk ? 13 : 11)}px; color: ${BLUE}; margin: 0 6px 0 8px; }
  span { flex: 1; margin-left: ${(p) => (p.$off ? 8 : 0)}px; }
  u { font-size: 9px; text-decoration: none; color: ${DIM}; width: 10px; }
`;

const TypeStyles = styled.div`
  display: flex;
  gap: 13px;
  padding: 7px 0 5px 31px;
  button { color: ${LIGHT}; font: 16px/16px "Liberation Serif", serif; height: 18px; }
  small { font-size: 12px; }
  sup, sub { font-size: 9px; line-height: 0; }
`;

const Cell = ({ icon, value, unit = "", cjk, off }) => (
  <CharCell $off={off} $cjk={cjk}>
    <Icon name={icon} size={17} h={16} />
    {value && <b>{value}</b>}
    <span>{unit}</span>
    <u>▼</u>
  </CharCell>
);

const Info = () => (
  <Panel $h={148}>
    <Tabs $pl={11}>
      <Tab $on $line $pl={3} $gap={10}>信息<Burger /></Tab>
      <Tab $ml={24}>音频</Tab>
    </Tabs>
    <InfoGrid>
      <ColorBox />
      <p>{"R :\nG :\nB :\nA :  0.0000"}</p>
      <VLine />
      <Position>
        <svg width="9" height="9"><path d="M0 4.500h9M4.500 0v9" stroke={LIGHT} /></svg>
        <p>{"X : -95\nY :  571"}</p>
      </Position>
    </InfoGrid>
    <Divider $m="0 8px 0 6px" />
    <InfoText>开始: 00000， 结束: 00102<br />工作区域持续时间: 00103</InfoText>
  </Panel>
);

const Preview = () => (
  <Panel $h={56}>
    <Tabs $pl={14}><Tab $on $gap={10}>预览<Burger /></Tab></Tabs>
    <Transport>
      {["first", "prev", "play", "next", "last"].map((n) => (
        <button key={n} aria-label={n}><Icon name={n} size={12} h={12} /></button>
      ))}
    </Transport>
  </Panel>
);

const Character = () => (
  <Panel $flex="1">
    <Tabs $pl={1}>
      <Tab>效果和预设</Tab>
      <Tab $on $line $ml={42} $pl={2} $gap={11}>字符<Burger /></Tab>
      <More><Icon name="more" size={12} /></More>
    </Tabs>
    <CharTop>
      <Stack>
        <TypeSelect aria-label="字体"><option>鸿雷行书简体</option></TypeSelect>
        <TypeSelect aria-label="字体样式"><option>-</option></TypeSelect>
      </Stack>
      <Stack>
        <IconButton $w={20} $h={20}><Icon name="dropper" size={17} /></IconButton>
        <BlackWhite aria-label="黑白" />
      </Stack>
      <svg width="43" height="44" viewBox="1 0 43 44">
        <path d="M14 14h28v29H14z" fill="#fff" stroke="#000" />
        <path d="M22 22h12v11H22z" fill="#232322" stroke="#000" />
        <path d="M14 43L42 14" stroke="#b5401f" strokeWidth="2" />
        <path d="M1 .5h29v29H1z" fill="#fff" stroke="#000" />
        <path d="M1.500 31.500h9v10h-9z" fill="#fff" stroke="#999" />
        <path d="M2 41l8-9" stroke="#b5401f" strokeWidth="1.500" />
        <path d="M36 1l-4 4 4 4V6q3 0 3 3h-2l3 4 3-4h-2q0-6-5-6z" fill="#bebebe" />
      </svg>
    </CharTop>
    <Divider $m="0 5px 1px" />
    <CharGrid>
      <Cell icon="fontSize" value="90" unit="像素" />
      <Cell icon="leading" value="自动" cjk />
      <Cell icon="kerning" unit="度量标准" off />
      <Cell icon="tracking" value="0" />
    </CharGrid>
    <Divider $m="5px 5px 3px" />
    <CharGrid $tight>
      <Cell icon="strokeW" value="-" unit="像素" />
      <Select aria-label="描边样式"><option></option></Select>
    </CharGrid>
    <Divider $m="4px 5px 3px" />
    <CharGrid>
      <Cell icon="vScale" value="100" unit="%" />
      <Cell icon="hScale" value="100" unit="%" />
      <Cell icon="baseline" value="0" unit="像素" />
      <Cell icon="tsume" value="0" unit="%" />
    </CharGrid>
    <Divider $m="6px 5px 0" />
    <TypeStyles>
      <button><b>T</b></button>
      <button><i>T</i></button>
      <button>TT</button>
      <button>T<small>T</small></button>
      <button>T<sup>1</sup></button>
      <button>T<sub>1</sub></button>
    </TypeStyles>
    <FlexRow $h={24} $p="0 0 0 11px">
      <Check $fs={13}><input type="checkbox" />连字</Check>
      <Check $fs={13} $ml={53} $gap={4}><input type="checkbox" />印地语数字</Check>
    </FlexRow>
  </Panel>
);

const ClipTab = styled(Tab)`
  width: 37px;
  justify-content: flex-end;
`;

const AlignRow = styled.div`
  display: flex;
  justify-content: space-between;
  padding: 2px 6px 4px 10px;
  color: #414141;
`;

const alignShapes = [
  ["M.5 0v18", "M2 2h8v6H2zM2 10h13v5H2z"],
  ["M9 0v18", "M5 2h8v6H5zM2 10h14v5H2z"],
  ["M17.500 0v18", "M8 2h8v6H8zM3 10h13v5H3z"],
  ["M0 .5h18", "M3 2h5v13H3zM10 2h6v8h-6z"],
  ["M0 8.500h18", "M3 2h5v13H3zM10 4h6v9h-6z"],
  ["M0 16.500h18", "M3 2h5v13H3zM10 7h6v8h-6z"],
];

const distributeShapes = [
  ["M0 .5h18M0 9.500h18", "M5 2h8v4H5zM3 11h12v5H3z"],
  ["M0 4.500h18M0 13.500h18", "M5 2h8v5H5zM3 11h12v5H3z"],
  ["M0 6.500h18M0 16.500h18", "M5 1h8v4H5zM3 10h12v5H3z"],
  ["M1 0v18M11 0v18", "M3 3h5v12H3zM12 5h4v8h-4z"],
  ["M4 0v18M13 0v18", "M2 3h5v12H2zM11 5h5v8h-5z"],
  ["M8 0v18M16 0v18", "M2 3h5v12H2zM11 5h4v8h-4z"],
];

const Shapes = ({ list }) => (
  <AlignRow>
    {list.map(([line, fill]) => (
      <button key={fill + line} aria-label="对齐">
        <svg width="18" height="18"><path d={line} stroke="currentColor" /><path d={fill} fill="currentColor" /></svg>
      </button>
    ))}
  </AlignRow>
);

const Align = () => (
  <Panel>
    <Tabs>
      <ClipTab>跟踪器</ClipTab>
      <Tab $on $line $ml={39} $pl={2} $gap={10}>对齐<Burger /></Tab>
      <Tab $ml={24} $w={19} $cut>段落</Tab>
      <More><Icon name="more" size={12} /></More>
    </Tabs>
    <FlexRow $h={28} $p="0 2px 2px 8px">
      <Caption>将图层对齐到:</Caption>
      <Select disabled $ml={3} $pl={7} aria-label="将图层对齐到"><option>选区</option></Select>
    </FlexRow>
    <Shapes list={alignShapes} />
    <Divider $m="0 4px 0 6px" />
    <FlexRow $h={16} $p="0 0 0 8px"><Caption>分布图层:</Caption></FlexRow>
    <Shapes list={distributeShapes} />
  </Panel>
);

/* ---------- timeline ---------- */

const TimelinePanel = styled(Panel)`
  position: relative;
  display: grid;
  grid-template-columns: minmax(0, 894fr) minmax(0, 602fr) 17px;
  grid-template-rows: minmax(0, 1fr) 17px;
  border: solid ${BLUE};
  border-width: 1px 1px 0 0;
`;

const LayerSide = styled.div`
  min-height: 0;
  display: flex;
  flex-direction: column;
`;

const TimelineHead = styled.div`
  height: 35px;
  flex: none;
  display: flex;
  align-items: center;
`;

const Clock = styled.div`
  width: 132px;
  margin: 0 12px 0 8px;
  text-align: center;
  white-space: nowrap;
  color: ${BLUE};
  b { display: block; font-size: 15px; line-height: 17px; margin-top: -1px; }
  span { display: block; font: 10px/13px "Liberation Mono", monospace; color: #2660a8; }
`;

const columns = css`
  display: grid;
  grid-template-columns: 67px 32px 33px minmax(0, 1fr) 147px 144px 117px 15px;
  align-items: center;
`;

const ColumnHead = styled.div`
  ${columns}
  height: 21px;
  flex: none;
  background: #303030;
  border: solid #000;
  border-width: 1px 0;
  color: #a8a8a8;
  & > * { height: 12px; border-right: 1px solid #000; display: flex; align-items: center; }
  & > *:last-child { border: 0; }
`;

const HeadText = styled.span`
  padding-left: ${(p) => p.$pl || 0}px;
  font-size: ${(p) => p.$fs || 13}px;
  color: ${(p) => p.$color || LIGHT};
`;

const HeadIcons = styled.span`
  padding-left: ${(p) => p.$pl || 0}px;
  gap: ${(p) => p.$gap || 4}px;
  color: ${LIGHT};
  em { font: italic 14px/12px "Liberation Serif", serif; width: 12px; }
`;

const LayerRow = styled.div`
  ${columns}
  height: 20px;
  flex: none;
  background: ${(p) => (p.$layer ? "#303030" : "#262626")};
  border-bottom: 1px solid #1e1e1e;
  color: #a8a8a8;
  & > span { display: flex; align-items: center; height: 19px; white-space: nowrap; }
`;

const Box = styled.button`
  width: 13px;
  height: 13px;
  margin-left: ${(p) => p.$ml || 0}px;
  background: ${(p) => (p.$clear ? "none" : "#232323")};
  display: grid;
  place-items: center;
  color: ${LIGHT};
`;

const LabelColor = styled.button`
  width: 15px;
  height: 15px;
  margin-left: 4px;
  background: ${TAN};
`;

const LayerSelect = styled(Select)`
  height: 17px;
  border: 0;
  border-radius: 0;
  flex: none;
`;

const KeyNav = styled.span`
  padding-left: 6px;
  gap: 5px;
  color: ${LIGHT};
  & > svg:first-child { color: #555; }
  i { display: grid; place-items: center; width: 14px; height: 16px; border: 1px solid #333; color: ${BLUE}; }
`;

const PropName = styled.span`
  grid-column: 3 / 5;
  padding-left: ${(p) => p.$pl}px;
  font-size: 11px;
  gap: 5px;
  button { width: 15px; height: 17px; display: grid; place-items: center; color: ${(p) => (p.$on ? BLUE : LIGHT)}; ${(p) => p.$on && "border: 1px solid #2f2f2f;"} }
  em { font-style: normal; margin-left: ${(p) => (p.$on ? 4 : 0)}px; }
`;

const Value = styled.span`
  padding-left: 4px;
  gap: 6px;
  font: 9px/12px "DejaVu Sans Mono", monospace;
  color: ${BLUE};
  svg { color: ${LIGHT}; }
`;

const Parent = styled.span`
  grid-column: 7;
  padding-left: 17px;
`;

const TimeSide = styled.div`
  min-height: 0;
  display: flex;
  flex-direction: column;
  border-left: 1px solid #000;
  background: ${PANEL};
`;

const Navigator = styled.div`
  flex: none;
  height: 11px;
  margin-top: 32px;
  display: flex;
  background: #686868;
  border: 1px solid #000;
  border-width: 1px 0;
  border-radius: 6px;
  overflow: hidden;
  justify-content: space-between;
  &::before, &::after { content: ""; width: 7px; background: ${BLUE}; }
`;

const Scale = styled.div`
  position: relative;
  flex: 1;
  min-height: 0;
  margin: 0 7px;
  display: flex;
  flex-direction: column;
`;

const Ruler = styled.div`
  position: relative;
  height: 18px;
  flex: none;
  font: 10px/11px "Liberation Sans", sans-serif;
`;

const Tick = styled.span`
  position: absolute;
  top: 0;
  width: 40px;
  height: 18px;
  margin-left: -20px;
  text-align: center;
  &::after { content: ""; position: absolute; left: 20px; bottom: 0; width: 1px; height: 5px; background: #999; }
`;

const WorkArea = styled.div`
  position: relative;
  height: 17px;
  flex: none;
  background: #606060;
  border: solid #000;
  border-width: 1px 0;
  &::before, &::after { content: ""; position: absolute; top: 0; bottom: 0; width: 5px; background: ${BLUE}; }
  &::before { left: -6px; border-radius: 4px 0 0 4px; }
  &::after { right: -6px; border-radius: 0 4px 4px 0; }
`;

const Cache = styled.div`
  height: 4px;
  flex: none;
  background: #16c02a;
  border-bottom: 1px solid #000;
`;

const LayerBar = styled.div`
  height: 20px;
  flex: none;
  border: solid #333;
  border-width: 2px 0;
  background: #736b5a;
`;

const Track = styled.div`
  position: relative;
  height: 20px;
  flex: none;
  background: #333;
  border-bottom: 1px solid #1f1f1f;
`;

const Key = styled.i`
  position: absolute;
  top: 4px;
  margin-left: -5px;
  color: #b5b5b5;
`;

const Empty = styled.div`
  flex: 1;
  background: #2f2f2f;
`;

const Playhead = styled.div`
  position: absolute;
  top: 1px;
  bottom: 0;
  left: -5px;
  width: 11px;
  display: flex;
  flex-direction: column;
  align-items: center;
  &::after { content: ""; flex: 1; width: 1px; background: ${BLUE}; }
`;

const IBeam = styled.svg`
  position: absolute;
  top: 3px;
  left: -4px;
`;

const Side = styled.div`
  padding: 64px 0 0 3px;
  color: ${LIGHT};
  svg + svg { margin-top: 7px; }
`;

const TimelineFoot = styled.div`
  display: flex;
  align-items: center;
  border-top: 1px solid #000;
`;

const ZoomRow = styled.label`
  grid-column: 2 / 4;
  display: flex;
  align-items: center;
  gap: 11px;
  padding-left: 7px;
  color: ${LIGHT};
  input { flex: none; width: 49px; height: 11px; }
`;

const Pointer = styled.svg`
  position: absolute;
  left: 730px;
  top: 77px;
`;

const frames = [0, 10, 20, 30, 40, 50, 60, 70, 80, 90, 100];
const LAST = 102;
const at = (frame) => ({ left: (frame / LAST) * 100 + "%" });

const Timeline = () => (
  <TimelinePanel>
    <LayerSide>
      <Tabs $pl={24}>
        <Tab $gap={12}><Swatch />球</Tab>
        <Tab $on $line $ml={40} $gap={11}><small>×</small><Swatch />合成2<Burger /></Tab>
      </Tabs>
      <TimelineHead>
        <Clock><b>00000</b><span>0:00:00:00 (25.00 fps)</span></Clock>
        <SearchField $flex="1"><Icon name="searchMenu" size={16} /><input aria-label="搜索图层" /></SearchField>
        <IconButton $w={17} $ml={16}><Icon name="flow" size={16} /></IconButton>
        <IconButton $w={17} $ml={16}><Icon name="draft" size={17} /></IconButton>
        <IconButton $w={16} $ml={18}><Icon name="shy" size={16} /></IconButton>
        <IconButton $w={14} $ml={11}><Icon name="film" size={14} /></IconButton>
        <IconButton $w={14} $ml={12}><Icon name="blur" size={14} /></IconButton>
        <IconButton $w={32} $ml={11}><Icon name="graph" size={16} /></IconButton>
        <Sep $ml={4} $mr={2} $h={0} />
      </TimelineHead>
      <ColumnHead>
        <HeadIcons $pl={4}><Icon name="eye" size={11} /><Icon name="sound" size={12} /><Icon name="dot" size={11} /><Icon name="lock" size={11} /></HeadIcons>
        <HeadIcons $pl={13}><Icon name="tag" size={12} /></HeadIcons>
        <HeadIcons $pl={6}>#</HeadIcons>
        <HeadText $pl={6}>源名称</HeadText>
        <HeadIcons $pl={4} $gap={3}>
          <Icon name="shySmall" size={12} /><Icon name="sun" size={11} /><Icon name="quality" size={12} /><em>fx</em>
          <Icon name="film" size={13} /><Icon name="blur" size={13} /><Icon name="adjust" size={12} /><Icon name="cube" size={12} />
        </HeadIcons>
        <HeadText $pl={6}>模式<HeadText $pl={39} $fs={11} $color={DIM}>T</HeadText><HeadText $pl={10} $fs={11} $color={DIM}>TrkMat</HeadText></HeadText>
        <HeadText $pl={6}>父级和链接</HeadText>
        <span />
      </ColumnHead>
      <LayerRow $layer>
        <span><Box $ml={3}><Icon name="eye" size={11} /></Box><Box $ml={17} /><Box $ml={2} /></span>
        <span><IconButton $w={8} $ml={6}><Icon name="chevron" size={8} /></IconButton><LabelColor aria-label="标签" /></span>
        <HeadText $pl={6} $fs={12}>1</HeadText>
        <span><IconButton $ml={2} $w={16}><Icon name="comp" size={16} h={13} /></IconButton>&nbsp;&nbsp;<b>球</b></span>
        <span>
          <Box $ml={3}><Icon name="shySmall" size={12} /></Box><Box $ml={2} /><Box $ml={2}><Icon name="slash" size={11} /></Box>
          <Box $ml={32} /><Box $ml={2} /><Box $ml={2} />
        </span>
        <span><LayerSelect $w={58} $ml={3} aria-label="模式"><option>正常</option></LayerSelect><Box $ml={5} /></span>
        <span>
          <Box $clear $ml={3}><Icon name="spiral" size={13} /></Box>
          <LayerSelect $w={89} $ml={7} aria-label="父级"><option>无</option></LayerSelect>
        </span>
      </LayerRow>
      <LayerRow>
        <KeyNav><Icon name="left" size={6} h={8} /><i><Icon name="diamond" size={10} /></i><Icon name="right" size={8} /></KeyNav>
        <span />
        <PropName $on $pl={8}><button aria-label="秒表"><Icon name="watchOn" size={13} /></button><Icon name="curve" size={11} /><em>时间重映射</em></PropName>
        <Value>00000</Value>
        <Parent><Icon name="spiral" size={13} /></Parent>
      </LayerRow>
      <LayerRow>
        <KeyNav><Icon name="left" size={6} h={8} /><i><Icon name="diamond" size={10} /></i><Icon name="right" size={8} /></KeyNav>
        <span />
        <PropName $on $pl={28}><button aria-label="秒表"><Icon name="watchOn" size={13} /></button><Icon name="curve" size={11} /><em>位置</em></PropName>
        <Value>25.0,250.0</Value>
        <Parent><Icon name="spiral" size={13} /></Parent>
      </LayerRow>
      <LayerRow>
        <span />
        <span />
        <PropName $pl={28}><button aria-label="秒表"><Icon name="watch" size={13} /></button><em>缩放</em></PropName>
        <Value><Icon name="chain" size={12} />100.0,100.0%</Value>
        <Parent><Icon name="spiral" size={13} /></Parent>
      </LayerRow>
    </LayerSide>
    <TimeSide>
      <Navigator />
      <Scale>
        <Ruler>{frames.map((f) => <Tick key={f} style={at(f)}>{String(f).padStart(5, "0")}</Tick>)}</Ruler>
        <WorkArea />
        <Cache />
        <LayerBar />
        <Track>
          <Key style={at(0)}><Icon name="diamond" size={10} /></Key>
          <Key style={at(90)}><Icon name="hourglass" size={10} /></Key>
          <Key style={at(102)}><Icon name="diamond" size={10} /></Key>
        </Track>
        <Track>
          <Key style={at(0)}><Icon name="diamond" size={10} /></Key>
          <Key style={at(101)}><Icon name="diamond" size={10} /></Key>
        </Track>
        <Track>
          <IBeam width="9" height="13"><path d="M1 1h3l.5 1 .5-1h3M1 12h3l.5-1 .5 1h3M4.500 2v9" {...s} /></IBeam>
        </Track>
        <Empty />
        <Playhead>
          <svg width="11" height="15"><path d="M0 0h11v7l-5.500 7L0 7z" fill={BLUE} /><path d="M3.500 7h4M5.500 7v6" stroke="#161616" /></svg>
        </Playhead>
      </Scale>
    </TimeSide>
    <Side><Icon name="marker" size={14} /><Icon name="bin" size={13} /></Side>
    <TimelineFoot>
      <IconButton $w={14} $ml={3} $h={14} $color={BLUE}><Icon name="layers" size={12} /></IconButton>
      <IconButton $w={14} $ml={5} $h={14} $color={BLUE}><Icon name="modes" size={12} /></IconButton>
      <IconButton $w={12} $ml={4} $h={14}><Icon name="braces" size={12} /></IconButton>
    </TimelineFoot>
    <ZoomRow>
      <Icon name="mountain" size={9} />
      <Range $size={10} type="range" defaultValue={0} aria-label="缩放时间轴" />
      <Icon name="mountain" size={16} />
    </ZoomRow>
    <Pointer width="13" height="19"><path d="M1 1v14l3.500-3 2.500 6 3-1.500-2.500-5.500H12z" fill="#bfe3e8" stroke="#111" /></Pointer>
  </TimelinePanel>
);

/* ---------- page ---------- */

const Workspace = styled.main`
  flex: 1;
  min-height: 0;
  display: grid;
  grid-template-columns: minmax(0, 1fr) 205px;
  grid-template-rows: minmax(0, 722fr) minmax(0, 334fr);
  gap: 4px;
`;

const Upper = styled.div`
  min-height: 0;
  display: grid;
  grid-template-columns: 318px minmax(0, 1fr) 173px;
  grid-template-rows: minmax(0, 1fr);
  gap: 4px;
`;

const menus = ["文件(F)", "编辑(E)", "合成(C)", "图层(L)", "效果(T)", "动画(A)", "视图(V)", "窗口", "帮助(H)"];

export default function App() {
  return (
    <Shell>
      <GlobalStyle />
      <MenuBar>{menus.map((m) => <button key={m}>{m}</button>)}</MenuBar>
      <Toolbar />
      <Workspace>
        <Upper>
          <Project />
          <Viewer />
          <Column>
            <Motion />
            <CircleAlign />
          </Column>
        </Upper>
        <Column>
          <Info />
          <Preview />
          <Character />
        </Column>
        <Timeline />
        <Align />
      </Workspace>
    </Shell>
  );
}
